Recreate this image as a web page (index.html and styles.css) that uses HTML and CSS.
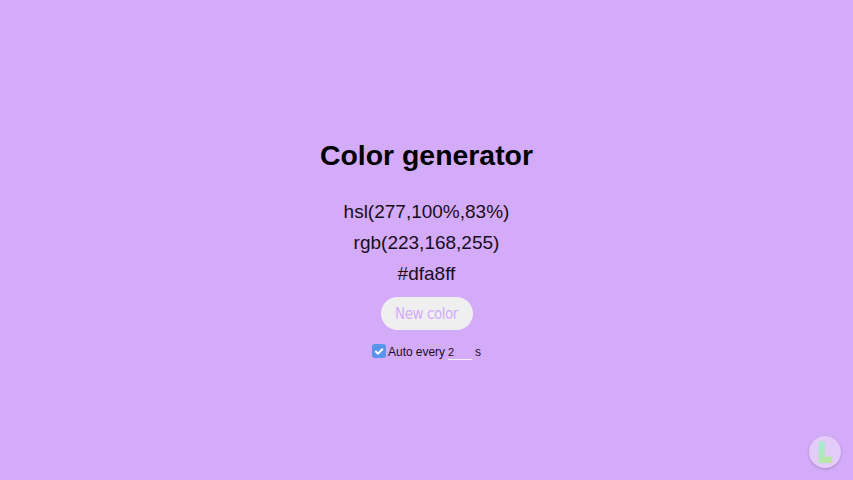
FILE: index.html
```html
<!DOCTYPE html>
<html lang="en">
<head>
<meta charset="utf-8">
<title>Color generator</title>
<link rel="stylesheet" href="styles.css">
</head>
<body>
<main class="generator">
<h1 class="title">Color generator</h1>
<p class="value">hsl(277,100%,83%)</p>
<p class="value">rgb(223,168,255)</p>
<p class="value">#dfa8ff</p>
<button class="new-color">New color</button>
<div class="auto">
<svg class="check" viewBox="0 0 14 14"><rect width="14" height="14" rx="3" fill="#5794ea"/><path d="M3.3 7l2.7 2.7 4.8-4.9" fill="none" stroke="#fff" stroke-width="2"/></svg>
<span class="label">Auto every</span><span class="seconds">2</span><span>s</span>
</div>
</main>
<a class="logo"><svg viewBox="0 0 32 32" width="32" height="32"><defs><linearGradient id="mint" x1="0" y1="0" x2=".6" y2="1"><stop offset="0" stop-color="#a5e8dc"/><stop offset="1" stop-color="#bde6a5"/></linearGradient></defs><path d="M9.3 5.5H16v15h7.3V27h-14z" fill="url(#mint)"/></svg></a>
</body>
</html>
```
FILE: styles.css
```css
body {
  margin: 0;
  height: 480px;
  background: #d3abf9;
  color: #180d20;
  font-family: "Liberation Sans", Arial, sans-serif;
  overflow: hidden;
}
.generator {
  display: flex;
  flex-direction: column;
  align-items: center;
  padding-top: 138px;
}
.title {
  margin: 0 0 29px;
  font-size: 28.4px;
  line-height: 34px;
  color: #000;
}
.value {
  margin: 0 0 9.2px;
  font-size: 19px;
  line-height: 22px;
}
.new-color {
  width: 92px;
  height: 33px;
  margin: 2.4px 0 14px;
  padding: 2px 0 0;
  border: 0;
  border-radius: 17px;
  background: #efeff0;
  color: #d3abf9;
  font: 15px "DejaVu Sans Condensed", "DejaVu Sans", sans-serif;
  font-stretch: condensed;
  letter-spacing: -0.45px;
}
.auto {
  display: flex;
  align-items: center;
  height: 16px;
  font-size: 12px;
}
.check {
  width: 14px;
  height: 14px;
  margin: 0 2px 1px 0;
}
.label {
  letter-spacing: -0.05px;
}
.seconds {
  box-sizing: border-box;
  width: 24px;
  height: 16px;
  margin: 0 3px;
  border-bottom: 1px solid #efeff0;
  font-size: 11px;
  line-height: 17px;
}
.logo {
  position: absolute;
  right: 12px;
  bottom: 12px;
  width: 32px;
  height: 32px;
  border-radius: 50%;
  background: #e3ccf7;
  box-shadow: 0 1px 3px #0003;
}
```
